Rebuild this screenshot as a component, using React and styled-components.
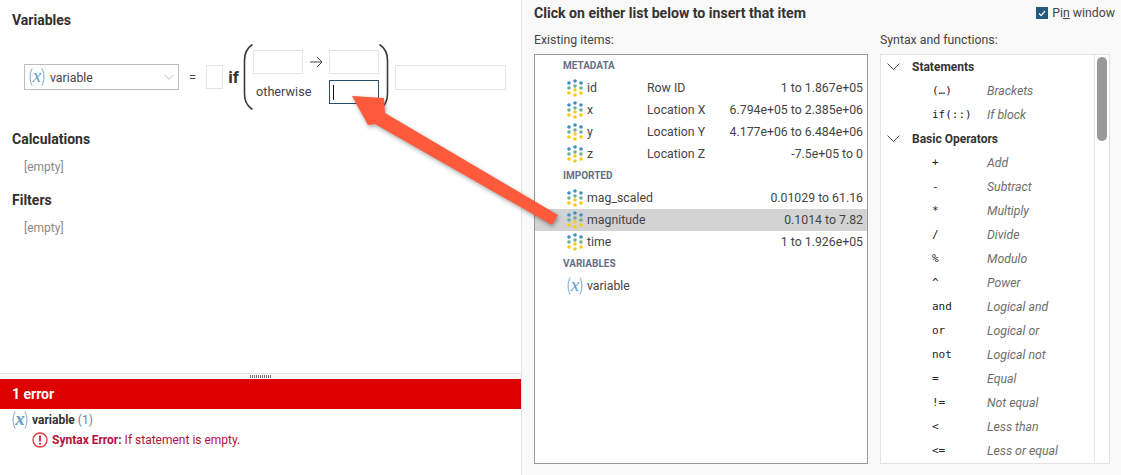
import React from "react";
import styled, { createGlobalStyle } from "styled-components";

const Global = createGlobalStyle`
  html, body { margin: 0; padding: 0; background: #fff; }
  body { font-family: Roboto, "Liberation Sans", sans-serif; font-size: 12px; color: #333; }
`;

const Page = styled.div`
  position: relative;
  width: 1121px;
  height: 475px;
  overflow: hidden;
  display: grid;
  grid-template-columns: 521px 1px 1fr;
`;

/* ---------- left side ---------- */
const Left = styled.div`
  display: flex;
  flex-direction: column;
  min-height: 0;
`;
const Editor = styled.div`
  height: 374px;
  flex: none;
  box-sizing: border-box;
  padding: 12px 12px 0;
  border-bottom: 1px solid #e4e4e4;
`;
const SectionTitle = styled.div`
  font-size: 14px;
  font-weight: 700;
  line-height: 16px;
  color: #2f2f2f;
  margin-top: ${(p) => p.$top || 0}px;
`;
const Empty = styled.div`
  font-size: 12px;
  line-height: 16px;
  color: #8a8a8a;
  margin: 12px 0 0 12px;
`;
const Formula = styled.div`
  display: flex;
  align-items: center;
  height: 66px;
  margin: 16px 0 0 12px;
`;
const Dropdown = styled.div`
  width: 155px;
  height: 26px;
  box-sizing: border-box;
  border: 1px solid #bdbdbd;
  display: flex;
  align-items: center;
  padding: 0 4px 0 4px;
  gap: 5px;
  font-size: 12.3px;
  color: #444;
`;
const DropLabel = styled.span`
  flex: 1;
  padding-top: 2px;
`;
const Equals = styled.span`
  width: 27px;
  text-align: center;
  font-size: 13px;
  color: #444;
`;
const Blank = styled.div`
  box-sizing: border-box;
  width: ${(p) => p.$w}px;
  height: ${(p) => p.$h || 24}px;
  border: 1px solid #e4e4e4;
  background: #fff;
`;
const ResultBlank = styled(Blank)`
  margin-left: 6px;
`;
const Focused = styled(Blank)`
  border-color: #26506b;
  display: flex;
  align-items: center;
  padding-left: 3px;
`;
const Caret = styled.span`
  width: 1px;
  height: 15px;
  background: #111;
`;
const IfWord = styled.span`
  font-size: 17px;
  font-weight: 700;
  color: #333;
  box-sizing: border-box;
  width: 20px;
  padding-left: 1px;
  text-align: center;
`;
const Cases = styled.div`
  display: grid;
  grid-template-columns: 50px 26px 50px;
  grid-auto-rows: 24px;
  row-gap: 6px;
  align-items: center;
`;
const Otherwise = styled.span`
  grid-column: 1 / span 2;
  padding: 0 0 2px 3px;
  font-size: 12.7px;
  color: #444;
`;
const CaseArrow = styled.span`
  display: flex;
  justify-content: center;
  color: #444;
`;
const Splitter = styled.div`
  height: 5px;
  flex: none;
  background: #f9f9f9;
  display: flex;
  align-items: center;
  justify-content: center;
`;
const Grip = styled.div`
  width: 21px;
  height: 3px;
  background: repeating-linear-gradient(90deg, #777 0 1px, transparent 1px 2px);
`;
const ErrorBar = styled.div`
  height: 30px;
  flex: none;
  background: #dc0000;
  color: #fff;
  font-size: 14px;
  font-weight: 700;
  line-height: 30px;
  padding-left: 12px;
`;
const ErrorBody = styled.div`
  flex: 1;
  padding: 1px 0 0 12px;
`;
const ErrorItem = styled.div`
  display: flex;
  align-items: center;
  gap: 4px;
  height: 20px;
  font-size: 12px;
  font-weight: 700;
  color: #333;
`;
const ErrorCount = styled.span`
  font-weight: 400;
  color: #6f8296;
`;
const ErrorLine = styled.div`
  display: flex;
  align-items: center;
  gap: 4px;
  height: 20px;
  margin-left: 20px;
  font-size: 12px;
  color: #b0123b;
`;
const Strong = styled.b`
  font-weight: 700;
`;
const VarSvg = styled.svg`
  flex: none;
  overflow: visible;
`;
const VarText = styled.text`
  font-family: "Liberation Serif", serif;
  font-style: italic;
  font-size: 19px;
  fill: #5f9cc8;
`;

const Divider = styled.div`
  background: #e4e4e4;
`;

/* ---------- right side ---------- */
const Right = styled.div`
  background: #f9f9f9;
  padding-left: 12px;
  display: flex;
  flex-direction: column;
`;
const Header = styled.div`
  height: 26px;
  display: flex;
  align-items: center;
  justify-content: space-between;
  padding-right: 6px;
`;
const Title = styled.div`
  font-size: 14.1px;
  font-weight: 700;
  color: #333;
`;
const Pin = styled.label`
  display: flex;
  align-items: center;
  gap: 4px;
  font-size: 12.3px;
  color: #444;
`;
const Check = styled.span`
  width: 12px;
  height: 12px;
  background: #225a80;
  display: flex;
  align-items: center;
  justify-content: center;
`;
const Under = styled.span`
  text-decoration: underline;
`;
const Columns = styled.div`
  display: grid;
  grid-template-columns: 334px 230px;
  column-gap: 12px;
`;
const Col = styled.div`
  display: flex;
  flex-direction: column;
`;
const Label = styled.div`
  height: 28px;
  line-height: 28px;
  font-size: 12.3px;
  color: #444;
`;
const ListBox = styled.div`
  height: 410px;
  box-sizing: border-box;
  border: 1px solid ${(p) => p.$border};
  background: #fff;
  overflow: hidden;
`;
const GroupLabel = styled.div`
  height: 22px;
  line-height: 22px;
  padding-left: 28px;
  font-size: 10px;
  font-weight: 700;
  color: #667085;
`;
const ItemRow = styled.div`
  height: 22px;
  box-sizing: border-box;
  display: grid;
  grid-template-columns: 20px 60px 1fr auto;
  align-items: center;
  padding: 0 4px 0 32px;
  font-size: 12.3px;
  line-height: 21px;
  color: #444;
  background: ${(p) => (p.$active ? "#d3d3d3" : "transparent")};
`;
const Value = styled.span`
  grid-column: 4;
  text-align: right;
`;
const SyntaxBox = styled(ListBox)`
  display: grid;
  grid-template-columns: 1fr 15px;
`;
const SyntaxList = styled.div`
  overflow: hidden;
`;
const ScrollTrack = styled.div`
  border-left: 1px solid #e4e4e4;
  padding: 2px 2px 0;
`;
const Thumb = styled.div`
  height: 84px;
  border-radius: 5px;
  background: #999;
`;
const FnHead = styled.div`
  height: 24px;
  display: flex;
  line-height: 24px;
  padding-left: 6px;
  gap: 12px;
  font-size: 12px;
  font-weight: 700;
  color: #333;
  align-items: flex-start;
`;
const Chevron = styled.svg`
  margin-top: ${(p) => p.$top || 0}px;
`;
const FnRow = styled.div`
  height: 24px;
  display: grid;
  grid-template-columns: 55px 1fr;
  padding-left: 51px;
  line-height: 24px;
`;
const Code = styled.span`
  font-family: "DejaVu Sans Mono", "Liberation Mono", monospace;
  font-size: 11px;
  color: #222;
`;
const Desc = styled.span`
  font-style: italic;
  font-size: 12.3px;
  color: #6e6e6e;
`;
const Overlay = styled.svg`
  position: absolute;
  left: 0;
  top: 0;
  pointer-events: none;
  filter: drop-shadow(1px 2px 2px rgba(0, 0, 0, 0.35));
`;

/* ---------- drawings ---------- */
const DataIcon = () => {
  const blue = "#3f8fc4", green = "#6fae93", yellow = "#fbc918";
  const side = [[4, blue], [9, green], [14, yellow]];
  const mid = [[2, blue], [7, green], [11, yellow], [16, yellow]];
  return (
    <svg width="16" height="18" viewBox="0 0 16 18">
      {side.map(([y, c]) => <circle key={`l${y}`} cx="2" cy={y} r="1.8" fill={c} />)}
      {mid.map(([y, c]) => <circle key={`m${y}`} cx="8" cy={y} r="1.8" fill={c} />)}
      {side.map(([y, c]) => <circle key={`r${y}`} cx="14" cy={y} r="1.8" fill={c} />)}
    </svg>
  );
};
const VarIcon = () => (
  <VarSvg width="16" height="20" viewBox="0 0 16 20">
    <path d="M3.2 1.5C0.4 6 0.4 14 3.2 18.5M12.8 1.5C15.6 6 15.6 14 12.8 18.5" fill="none" stroke="#6ea6d0" strokeWidth="1" />
    <VarText x="8" y="14.5" textAnchor="middle">x</VarText>
  </VarSvg>
);
const Paren = ({ flip }) => (
  <svg width="10" height="66" viewBox="0 0 10 66" style={flip ? { transform: "scaleX(-1)" } : undefined}>
    <path d="M9.5 0.5C4 4 1.5 9 1.5 16V50C1.5 57 4 62 9.5 65.5" fill="none" stroke="#3a3a3a" strokeWidth="1.6" />
  </svg>
);
const Down = ({ color = "#555", w = 13, h = 7, top = 0 }) => (
  <Chevron $top={top} width={w} height={h} viewBox="0 0 13 7">
    <path d="M0.5 0.5L6.5 6.5L12.5 0.5" fill="none" stroke={color} strokeWidth="1" />
  </Chevron>
);
const ThinArrow = () => (
  <svg width="13" height="12" viewBox="0 0 13 12">
    <path d="M0 6H12M7 1L12 6L7 11" fill="none" stroke="#444" strokeWidth="1" />
  </svg>
);
const ErrorIcon = () => (
  <svg width="16" height="16" viewBox="0 0 16 16">
    <circle cx="8" cy="8" r="7" fill="#fff" stroke="#e0363d" strokeWidth="1.3" />
    <path d="M8 3.6V9.4" stroke="#c8102e" strokeWidth="1.7" />
    <circle cx="8" cy="11.7" r="1" fill="#c8102e" />
  </svg>
);

/* ---------- data ---------- */
const metadata = [
  ["id", "Row ID", "1 to 1.867e+05"],
  ["x", "Location X", "6.794e+05 to 2.385e+06"],
  ["y", "Location Y", "4.177e+06 to 6.484e+06"],
  ["z", "Location Z", "-7.5e+05 to 0"],
];
const imported = [
  ["mag_scaled", "", "0.01029 to 61.16"],
  ["magnitude", "", "0.1014 to 7.82", true],
  ["time", "", "1 to 1.926e+05"],
];
const statements = [["(…)", "Brackets"], ["if(::)", "If block"]];
const operators = [
  ["+", "Add"], ["-", "Subtract"], ["*", "Multiply"], ["/", "Divide"], ["%", "Modulo"],
  ["^", "Power"], ["and", "Logical and"], ["or", "Logical or"], ["not", "Logical not"],
  ["=", "Equal"], ["!=", "Not equal"], ["<", "Less than"], ["<=", "Less or equal"],
];

const Item = ({ row }) => (
  <ItemRow $active={row[3]}>
    <DataIcon />
    <span>{row[0]}</span>
    <span>{row[1]}</span>
    <Value>{row[2]}</Value>
  </ItemRow>
);
const Fn = ({ row }) => (
  <FnRow>
    <Code>{row[0]}</Code>
    <Desc>{row[1]}</Desc>
  </FnRow>
);

export default function App() {
  return (
    <Page>
      <Global />
      <Left>
        <Editor>
          <SectionTitle>Variables</SectionTitle>
          <Formula>
            <Dropdown>
              <VarIcon />
              <DropLabel>variable</DropLabel>
              <Down color="#aaa" w={10} h={6} />
            </Dropdown>
            <Equals>=</Equals>
            <Blank $w={17} />
            <IfWord>if</IfWord>
            <Paren />
            <Cases>
              <Blank $w={50} />
              <CaseArrow><ThinArrow /></CaseArrow>
              <Blank $w={50} />
              <Otherwise>otherwise</Otherwise>
              <Focused $w={50}><Caret /></Focused>
            </Cases>
            <Paren flip />
            <ResultBlank $w={111} $h={25} />
          </Formula>
          <SectionTitle $top={21}>Calculations</SectionTitle>
          <Empty>[empty]</Empty>
          <SectionTitle $top={17}>Filters</SectionTitle>
          <Empty>[empty]</Empty>
        </Editor>
        <Splitter><Grip /></Splitter>
        <ErrorBar>1 error</ErrorBar>
        <ErrorBody>
          <ErrorItem>
            <VarIcon />
            <span>variable <ErrorCount>(1)</ErrorCount></span>
          </ErrorItem>
          <ErrorLine>
            <ErrorIcon />
            <span><Strong>Syntax Error:</Strong> If statement is empty.</span>
          </ErrorLine>
        </ErrorBody>
      </Left>
      <Divider />
      <Right>
        <Header>
          <Title>Click on either list below to insert that item</Title>
          <Pin>
            <Check>
              <svg width="8" height="7" viewBox="0 0 8 7">
                <path d="M1 3.5L3.2 5.7L7 1" fill="none" stroke="#fff" strokeWidth="1.2" />
              </svg>
            </Check>
            <span>Pi<Under>n</Under> window</span>
          </Pin>
        </Header>
        <Columns>
          <Col>
            <Label>Existing items:</Label>
            <ListBox $border="#999">
              <GroupLabel>METADATA</GroupLabel>
              {metadata.map((r) => <Item key={r[0]} row={r} />)}
              <GroupLabel>IMPORTED</GroupLabel>
              {imported.map((r) => <Item key={r[0]} row={r} />)}
              <GroupLabel>VARIABLES</GroupLabel>
              <ItemRow>
                <VarIcon />
                <span>variable</span>
              </ItemRow>
            </ListBox>
          </Col>
          <Col>
            <Label>Syntax and functions:</Label>
            <SyntaxBox $border="#e2e2e2">
              <SyntaxList>
                <FnHead><Down top={8} />Statements</FnHead>
                {statements.map((r) => <Fn key={r[0]} row={r} />)}
                <FnHead><Down top={8} />Basic Operators</FnHead>
                {operators.map((r) => <Fn key={r[0]} row={r} />)}
              </SyntaxList>
              <ScrollTrack><Thumb /></ScrollTrack>
            </SyntaxBox>
          </Col>
        </Columns>
      </Right>
      <Overlay width="1121" height="475" viewBox="0 0 1121 475">
        <polygon points="352,96 384,98 385,113 558,215 552,225 375,124 368,125" fill="#ff5a3c" />
      </Overlay>
    </Page>
  );
}
